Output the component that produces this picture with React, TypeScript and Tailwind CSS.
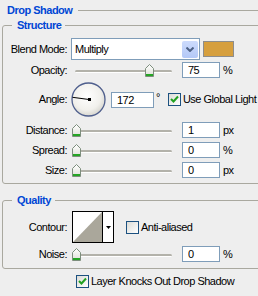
import React from "react";
import clsx from "clsx";

const Thumb = ({ left }: { left: number }) => (
  <svg
    width="9"
    height="13"
    viewBox="0 0 9 13"
    className="absolute top-0"
    style={{ left }}
  >
    <defs>
      <linearGradient id="thumbFill" x1="0" y1="0" x2="0" y2="1">
        <stop offset="0" stopColor="#ffffff" />
        <stop offset="1" stopColor="#dedfd6" />
      </linearGradient>
    </defs>
    <path
      d="M0.5 12.5 V4.5 L4.5 0.5 L8.5 4.5 V12.5 Z"
      fill="url(#thumbFill)"
      stroke="#7d8e7d"
    />
    <rect x="1" y="10" width="7" height="2" fill="#25a525" />
  </svg>
);

const Slider = ({ value }: { value: number }) => (
  <div className="relative h-[13px] w-[111px]">
    <div className="absolute left-[4px] top-[6px] h-[3px] w-[97px] rounded-full border-b border-white bg-[#b3b2aa]" />
    <Thumb left={1 + value * 97} />
  </div>
);

const NumBox = ({ value, w = "w-[38px]" }: { value: string; w?: string }) => (
  <input
    readOnly
    value={value}
    className={clsx(
      "h-[16px] border border-[#7f9db9] bg-white pl-[5px] text-[11px] leading-[14px] outline-none",
      w
    )}
  />
);

const Check = ({ on }: { on?: boolean }) => (
  <span className="flex h-[13px] w-[13px] items-center justify-center border border-[#1c5180] bg-gradient-to-br from-[#dcdcd7] to-white">
    {on && (
      <svg width="11" height="11" viewBox="0 0 11 11">
        <path d="M2 5 L4.5 7.5 L9 2.5" fill="none" stroke="#21a121" strokeWidth="2" />
      </svg>
    )}
  </span>
);

const Row = ({
  label,
  className,
  children,
}: {
  label: string;
  className?: string;
  children: React.ReactNode;
}) => (
  <div className={clsx("flex items-center", className)}>
    <span className="w-[64px] text-right">{label}</span>
    <div className="ml-[4px] flex items-center">{children}</div>
  </div>
);

const Dial = () => (
  <svg width="35" height="35" viewBox="0 0 35 35">
    <defs>
      <radialGradient id="dialFill" cx="0.45" cy="0.4" r="0.6">
        <stop offset="0" stopColor="#ffffff" />
        <stop offset="0.7" stopColor="#f1f0ec" />
        <stop offset="1" stopColor="#d8d7d0" />
      </radialGradient>
    </defs>
    <circle cx="17.5" cy="17.5" r="16.5" fill="url(#dialFill)" stroke="#4f5f8d" strokeWidth="1.3" />
    <line x1="18" y1="17.5" x2="1.5" y2="15.3" stroke="#000" strokeWidth="1" />
    <rect x="17" y="16" width="3" height="3" fill="#000" />
  </svg>
);

const Contour = () => (
  <div className="flex h-[32px] w-[42px] border border-black bg-white">
    <svg width="29" height="30" viewBox="0 0 29 30">
      <polygon points="0,30 29,0 29,30" fill="#aaa79b" />
    </svg>
    <div className="flex flex-1 items-center justify-center border-l border-black">
      <svg width="5" height="3" viewBox="0 0 5 3">
        <polygon points="0,0 5,0 2.5,3" fill="#000" />
      </svg>
    </div>
  </div>
);

export default function App() {
  return (
    <div className="h-[296px] w-[258px] overflow-hidden bg-[#eeeeee] font-['Liberation_Sans',Arial,sans-serif] text-[11px] leading-[13px] tracking-[-0.5px] text-black">
      <div className="flex items-center pl-[7px] pt-[4px]">
        <span className="font-bold text-[#0046d5]">Drop Shadow</span>
        <div className="ml-[6px] h-px flex-1 bg-[#a9a89f]" />
      </div>

      <fieldset className="ml-[2px] mt-[2px] w-[280px] rounded-[3px] border border-[#a9a89f] pb-[5px] pt-[6px]">
        <legend className="ml-[9px] pl-[5px] pr-[4px] font-bold text-[#0046d5]">
          Structure
        </legend>

        <Row label="Blend Mode:" className="h-[22px]">
          <div className="flex h-[22px] w-[129px] items-center border border-[#7f9db9] bg-white pl-[3px]">
            <span>Multiply</span>
            <span className="ml-auto mr-[1px] flex h-[17px] w-[16px] items-center justify-center rounded-[2px] bg-gradient-to-b from-[#cddbfc] to-[#b3c8f7]">
              <svg width="8" height="5" viewBox="0 0 8 5">
                <path d="M0.5 0.5 L4 4 L7.5 0.5" fill="none" stroke="#4d6185" strokeWidth="2" />
              </svg>
            </span>
          </div>
          <span className="ml-[3px] h-[16px] w-[31px] border border-[#8d8d8d] bg-[#d69f3e]" />
        </Row>

        <Row label="Opacity:" className="mt-[2px] h-[16px]">
          <Slider value={0.75} />
          <NumBox value="75" />
          <span className="ml-[3px]">%</span>
        </Row>

        <Row label="Angle:" className="mt-[4px] h-[35px]">
          <Dial />
          <div className="ml-[5px] flex h-[16px] items-center">
            <NumBox value="172" w="w-[43px]" />
            <span className="ml-[2px] self-start leading-[11px]">°</span>
          </div>
          <span className="ml-[8px]">
            <Check on />
          </span>
          <span className="ml-[2px] whitespace-nowrap">Use Global Light</span>
        </Row>

        <Row label="Distance:" className="mt-[5px] h-[16px]">
          <Slider value={0} />
          <NumBox value="1" />
          <span className="ml-[3px]">px</span>
        </Row>

        <Row label="Spread:" className="mt-[4px] h-[16px]">
          <Slider value={0} />
          <NumBox value="0" />
          <span className="ml-[3px]">%</span>
        </Row>

        <Row label="Size:" className="mt-[4px] h-[16px]">
          <Slider value={0} />
          <NumBox value="0" />
          <span className="ml-[3px]">px</span>
        </Row>
      </fieldset>

      <fieldset className="ml-[2px] mt-[10px] w-[280px] rounded-[3px] border border-[#a9a89f] pb-[6px] pt-[4px]">
        <legend className="ml-[9px] pl-[5px] pr-[4px] font-bold text-[#0046d5]">
          Quality
        </legend>

        <Row label="Contour:" className="h-[32px]">
          <span className="ml-[1px]">
            <Contour />
          </span>
          <span className="ml-[12px]">
            <Check />
          </span>
          <span className="ml-[2px]">Anti-aliased</span>
        </Row>

        <Row label="Noise:" className="mt-[3px] h-[16px]">
          <Slider value={0} />
          <NumBox value="0" />
          <span className="ml-[3px]">%</span>
        </Row>
      </fieldset>

      <div className="mt-[6px] flex items-center pl-[76px]">
        <Check on />
        <span className="ml-[2px]">Layer Knocks Out Drop Shadow</span>
      </div>
    </div>
  );
}
